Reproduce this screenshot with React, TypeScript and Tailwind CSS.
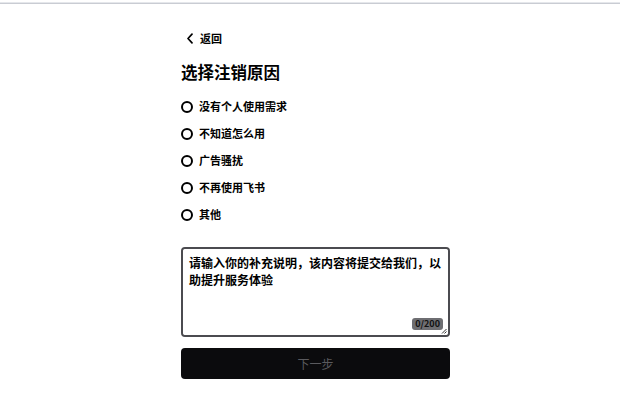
import { useState } from 'react';

const REASONS = ['没有个人使用需求', '不知道怎么用', '广告骚扰', '不再使用飞书', '其他'];

const FONT = '"Noto Sans CJK SC", "Liberation Sans", sans-serif';

export default function App() {
  const [selected, setSelected] = useState<number | null>(null);
  const [text, setText] = useState('');

  return (
    <div className="min-h-[410px] w-full bg-white" style={{ fontFamily: FONT }}>
      <div className="h-[2px] bg-white" />
      <div className="h-[1px] bg-[#e5e7eb]" />
      <div className="h-[1px] bg-[#c9ccd3]" />

      <div className="mx-auto w-[280px] pl-[11px] pt-[26px]">
        <button type="button" className="flex h-[16px] items-center gap-[6px] pl-[5px] text-[11px] font-bold leading-none text-black">
          <svg width="8" height="11" viewBox="0 0 8 11" fill="none">
            <path d="M6 1.2 L2 5.5 L6 9.8" stroke="#000" strokeWidth="1.7" strokeLinecap="round" strokeLinejoin="round" />
          </svg>
          返回
        </button>

        <h1 className="mt-[15px] text-[16.5px] font-bold leading-[22px] text-black">选择注销原因</h1>

        <div className="mt-[10px] flex flex-col">
          {REASONS.map((r, i) => (
            <label key={r} className="flex h-[27px] cursor-pointer items-center gap-[6px]" onClick={() => setSelected(i)}>
              <span className="flex h-[12px] w-[12px] items-center justify-center rounded-full border-2 border-black">
                {selected === i && <span className="h-[4px] w-[4px] rounded-full bg-black" />}
              </span>
              <span className="text-[11px] font-bold leading-none text-black">{r}</span>
            </label>
          ))}
        </div>

        <div className="relative mt-[19px] h-[90px] rounded-[4px] border-2 border-[#4b4b50]">
          <textarea
            value={text}
            maxLength={200}
            onChange={(e) => setText(e.target.value)}
            placeholder="请输入你的补充说明，该内容将提交给我们，以助提升服务体验"
            className="h-full w-full resize-none rounded-[3px] bg-white pl-[6px] pr-[3px] pt-[5px] text-[12px] font-bold leading-[17px] text-black outline-none placeholder:text-black"
            style={{ fontFamily: FONT }}
          />
          <span className="absolute bottom-[5px] right-[5px] rounded-[3px] bg-[#6e6e72] px-[3px] text-[9px] font-bold leading-[12px] text-[#111]">
            {text.length}/200
          </span>
          <svg className="absolute bottom-[1px] right-[1px]" width="6" height="6" viewBox="0 0 6 6">
            <path d="M5.5 1 L1 5.5 M5.5 3.5 L3.5 5.5" stroke="#333" strokeWidth="1" />
          </svg>
        </div>

        <button
          type="button"
          disabled={selected === null}
          className="mt-[11px] flex h-[31px] w-full items-center justify-center rounded-[4px] bg-[#0b0b0d] text-[12px] text-[#5a5a5e]"
        >
          下一步
        </button>
      </div>
    </div>
  );
}
